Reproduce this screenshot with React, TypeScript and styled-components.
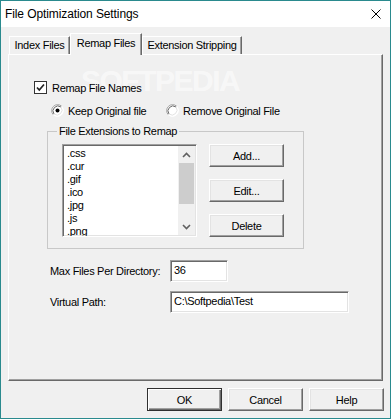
import React from "react";
import styled, { createGlobalStyle, css } from "styled-components";

const Global = createGlobalStyle`
  html, body { margin: 0; padding: 0; background: #f0f0f0; }
  body { font-family: "Liberation Sans", Arial, sans-serif; font-size: 11px; color: #000; }
  * { box-sizing: border-box; }
`;

const Window = styled.div`
  position: relative;
  width: 391px;
  height: 419px;
  border: 1px solid #2a8a8e;
  background: #f0f0f0;
  display: flex;
  flex-direction: column;
  overflow: hidden;
  letter-spacing: -0.3px;
`;

const TitleBar = styled.div`
  height: 26px;
  background: #fff;
  display: flex;
  align-items: center;
  justify-content: space-between;
  padding: 0 9px 0 4px;
  flex: none;
`;

const Title = styled.span`
  font-size: 12px;
  letter-spacing: -0.1px;
  color: #000;
`;

const Body = styled.div`
  flex: 1;
  display: flex;
  flex-direction: column;
  padding: 6px 7px 7px 7px;
`;

const TabStrip = styled.div`
  display: flex;
  align-items: flex-end;
  height: 21px;
  padding-left: 1px;
  flex: none;
`;

const Tab = styled.div<{ $active?: boolean; $width: number }>`
  width: ${(p) => p.$width}px;
  height: 18px;
  background: #f0f0f0;
  border-top: 1px solid #fff;
  border-left: 1px solid #fff;
  border-right: 1px solid #696969;
  box-shadow: inset -1px 0 0 #a0a0a0;
  display: flex;
  align-items: center;
  justify-content: center;
  padding-bottom: 1px;
  white-space: nowrap;
  ${(p) =>
    p.$active &&
    css`
      position: relative;
      z-index: 1;
      height: 22px;
      margin-bottom: -1px;
      padding-bottom: 4px;
    `}
`;

const Panel = styled.div`
  position: relative;
  z-index: 0;
  height: 327px;
  border-top: 1px solid #fff;
  border-left: 1px solid #fff;
  border-right: 1px solid #696969;
  border-bottom: 1px solid #696969;
  box-shadow: inset -1px -1px 0 #a0a0a0;
  display: flex;
  flex-direction: column;
  align-items: flex-start;
  flex: none;
`;

const Watermark = styled.div`
  position: absolute;
  left: 72px;
  top: 9px;
  font-size: 30px;
  font-weight: bold;
  letter-spacing: -1.5px;
  color: rgba(255, 255, 255, 0.55);
  pointer-events: none;
  white-space: nowrap;
  z-index: -1;
`;

const CheckRow = styled.label`
  display: flex;
  align-items: center;
  height: 13px;
  margin: 26px 0 0 25px;
  gap: 5px;
`;

const CheckBox = styled.span`
  width: 13px;
  height: 13px;
  border: 1px solid #333;
  background: #fff;
  display: flex;
  align-items: center;
  justify-content: center;
`;

const RadioRow = styled.div`
  display: flex;
  align-items: center;
  height: 13px;
  margin: 10px 0 0 42px;
`;

const RadioOption = styled.label<{ $width?: number }>`
  display: flex;
  align-items: center;
  gap: 4px;
  ${(p) => p.$width && `width: ${p.$width}px;`}
  white-space: nowrap;
`;

const Group = styled.fieldset`
  margin: 8px 0 0 38px;
  padding: 6px 19px 11px 14px;
  width: 257px;
  min-inline-size: 0;
  border: 1px solid #c8c8c8;
  display: flex;
  gap: 12px;
`;

const Legend = styled.legend`
  margin-left: -5px;
  padding: 0 2px;
  line-height: 13px;
  height: 13px;
`;

const ListBox = styled.div`
  width: 135px;
  height: 93px;
  background: #fff;
  border-top: 1px solid #a0a0a0;
  border-left: 1px solid #a0a0a0;
  border-right: 1px solid #fff;
  border-bottom: 1px solid #fff;
  box-shadow: inset 1px 1px 0 #696969, inset -1px -1px 0 #e3e3e3;
  display: flex;
  overflow: hidden;
  flex: none;
`;

const Items = styled.div`
  flex: 1;
  padding: 2px 0 0 4px;
  overflow: hidden;
`;

const Item = styled.div`
  height: 13px;
  line-height: 13px;
  white-space: nowrap;
`;

const ScrollBar = styled.div`
  width: 17px;
  margin: 1px 1px 1px 0;
  background: #f0f0f0;
  display: flex;
  flex-direction: column;
`;

const ScrollButton = styled.div`
  height: 17px;
  display: flex;
  align-items: center;
  justify-content: center;
  flex: none;
`;

const Thumb = styled.div`
  height: 41px;
  margin: 0 1px;
  background: #cdcdcd;
  flex: none;
`;

const Track = styled.div`
  flex: 1;
`;

const ButtonColumn = styled.div`
  display: flex;
  flex-direction: column;
  gap: 12px;
`;

const Button = styled.button<{ $default?: boolean }>`
  width: 75px;
  height: 23px;
  padding: 0;
  margin: 0;
  font-family: "Liberation Sans", Arial, sans-serif;
  font-size: 11px;
  letter-spacing: -0.3px;
  color: #000;
  background: #f0f0f0;
  border-top: 1px solid #fff;
  border-left: 1px solid #fff;
  border-right: 1px solid #696969;
  border-bottom: 1px solid #696969;
  box-shadow: inset -1px -1px 0 #a0a0a0, inset 1px 1px 0 #e3e3e3;
  ${(p) =>
    p.$default &&
    css`
      border: 1px solid #303030;
      box-shadow: inset 1px 1px 0 #fff, inset -1px -1px 0 #696969,
        inset -2px -2px 0 #a0a0a0;
    `}
`;

const FieldRow = styled.div<{ $top: number }>`
  display: flex;
  align-items: center;
  margin: ${(p) => p.$top}px 0 0 41px;
`;

const FieldLabel = styled.span`
  width: 120px;
  white-space: nowrap;
`;

const TextBox = styled.div<{ $width: number }>`
  width: ${(p) => p.$width}px;
  height: 22px;
  background: #fff;
  border-top: 1px solid #a0a0a0;
  border-left: 1px solid #a0a0a0;
  border-right: 1px solid #fff;
  border-bottom: 1px solid #fff;
  box-shadow: inset 1px 1px 0 #696969, inset -1px -1px 0 #e3e3e3;
  padding: 3px 0 0 3px;
  line-height: 13px;
  white-space: nowrap;
`;

const Footer = styled.div`
  display: flex;
  justify-content: flex-end;
  gap: 6px;
  margin: 7px -1px 0 0;
`;

const Chevron = ({ up }: { up?: boolean }) => (
  <svg width="9" height="6" viewBox="0 0 9 6">
    <polyline
      points={up ? "1,5 4.5,1.5 8,5" : "1,1 4.5,4.5 8,1"}
      fill="none"
      stroke="#606060"
      strokeWidth="1.6"
    />
  </svg>
);

const Radio = ({ checked }: { checked?: boolean }) => (
  <svg width="13" height="13" viewBox="0 0 13 13">
    <circle cx="6.5" cy="6.5" r="6" fill="#fff" />
    <path d="M2.26 10.74 A6 6 0 0 1 10.74 2.26" fill="none" stroke="#a0a0a0" strokeWidth="1" />
    <path d="M10.74 2.26 A6 6 0 0 1 2.26 10.74" fill="none" stroke="#fff" strokeWidth="1" />
    <path d="M3 10 A5 5 0 0 1 10 3" fill="none" stroke="#696969" strokeWidth="1" />
    <path d="M10 3 A5 5 0 0 1 3 10" fill="none" stroke="#e3e3e3" strokeWidth="1" />
    {checked && <circle cx="6.5" cy="6.5" r="2" fill="#000" />}
  </svg>
);

const files = [".css", ".cur", ".gif", ".ico", ".jpg", ".js", ".png"];

export default function App() {
  return (
    <>
      <Global />
      <Window>
        <TitleBar>
          <Title>File Optimization Settings</Title>
          <svg width="10" height="10" viewBox="0 0 10 10">
            <path d="M0.5 0.5 L9.5 9.5 M9.5 0.5 L0.5 9.5" stroke="#000" strokeWidth="1" />
          </svg>
        </TitleBar>
        <Body>
          <TabStrip>
            <Tab $width={61}>Index Files</Tab>
            <Tab $width={72} $active>
              Remap Files
            </Tab>
            <Tab $width={100}>Extension Stripping</Tab>
          </TabStrip>
          <Panel>
            <Watermark>SOFTPEDIA</Watermark>
            <CheckRow>
              <CheckBox>
                <svg width="11" height="11" viewBox="0 0 11 11">
                  <polyline points="2,5.5 4.3,8 9,2.5" fill="none" stroke="#222" strokeWidth="1.7" />
                </svg>
              </CheckBox>
              Remap File Names
            </CheckRow>
            <RadioRow>
              <RadioOption $width={115}>
                <Radio checked />
                Keep Original file
              </RadioOption>
              <RadioOption>
                <Radio />
                Remove Original File
              </RadioOption>
            </RadioRow>
            <Group>
              <Legend>File Extensions to Remap</Legend>
              <ListBox>
                <Items>
                  {files.map((f) => (
                    <Item key={f}>{f}</Item>
                  ))}
                </Items>
                <ScrollBar>
                  <ScrollButton>
                    <Chevron up />
                  </ScrollButton>
                  <Thumb />
                  <Track />
                  <ScrollButton>
                    <Chevron />
                  </ScrollButton>
                </ScrollBar>
              </ListBox>
              <ButtonColumn>
                <Button>Add...</Button>
                <Button>Edit...</Button>
                <Button>Delete</Button>
              </ButtonColumn>
            </Group>
            <FieldRow $top={11}>
              <FieldLabel>Max Files Per Directory:</FieldLabel>
              <TextBox $width={58}>36</TextBox>
            </FieldRow>
            <FieldRow $top={9}>
              <FieldLabel>Virtual Path:</FieldLabel>
              <TextBox $width={179}>C:\Softpedia\Test</TextBox>
            </FieldRow>
          </Panel>
          <Footer>
            <Button $default>OK</Button>
            <Button>Cancel</Button>
            <Button>Help</Button>
          </Footer>
        </Body>
      </Window>
    </>
  );
}
